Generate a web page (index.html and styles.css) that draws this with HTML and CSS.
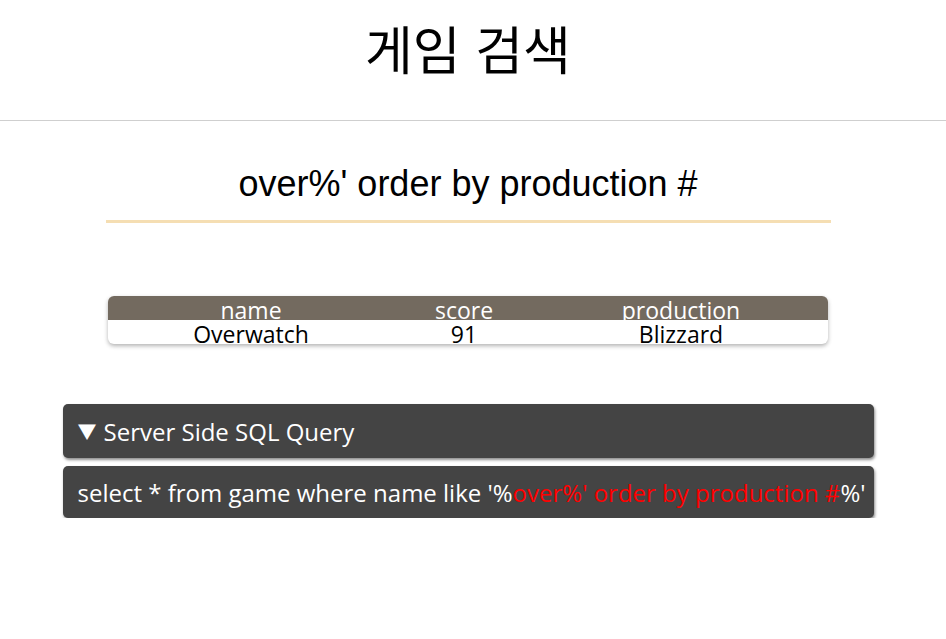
FILE: index.html
```html
<!DOCTYPE html>
<html lang="ko">
<head>
<meta charset="utf-8">
<title>게임 검색</title>
<link rel="stylesheet" href="styles.css">
</head>
<body>
<header class="top">
  <h1 class="title">게임 검색</h1>
</header>
<main class="page">
  <div class="search">
    <input class="search-input" type="text" value="over%' order by production #">
  </div>
  <table class="results">
    <thead>
      <tr><th class="c-name"><div class="cell">name</div></th><th class="c-score"><div class="cell">score</div></th><th class="c-prod"><div class="cell">production</div></th></tr>
    </thead>
    <tbody>
      <tr><td><div class="cell">Overwatch</div></td><td><div class="cell">91</div></td><td><div class="cell">Blizzard</div></td></tr>
    </tbody>
  </table>
  <details class="query" open>
    <summary class="query-head"><span class="tri">▼</span>Server Side SQL Query</summary>
    <div class="query-body">select * from game where name like '%<span class="inj">over%' order by production #</span>%'</div>
  </details>
</main>
</body>
</html>
```
FILE: styles.css
```css
html, body {
  margin: 0;
  padding: 0;
  background: #fff;
}
body {
  font-family: "Open Sans", "Noto Sans CJK KR", sans-serif;
  color: #000;
}
.top {
  border-bottom: 1px solid #cfcfcf;
  height: 121px;
  box-sizing: border-box;
}
.title {
  width: 936px;
  margin: 0;
  text-align: center;
  font-family: "Noto Sans CJK KR", sans-serif;
  font-weight: 400;
  font-size: 52px;
  line-height: 96px;
  letter-spacing: 0;
}
.page {
  width: 936px;
  display: flex;
  flex-direction: column;
  align-items: center;
}
.search {
  margin-top: 36px;
}
.search-input {
  display: block;
  width: 725px;
  box-sizing: border-box;
  border: none;
  border-bottom: 3px solid #f5deb3;
  padding: 6px 0 15px;
  margin: 0;
  font-family: "Liberation Sans", Arial, sans-serif;
  font-size: 36px;
  text-align: center;
  color: #000;
  background: transparent;
  outline: none;
}
.results {
  margin-top: 73px;
  width: 720px;
  border-collapse: separate;
  border-spacing: 0;
  border-radius: 6px;
  overflow: hidden;
  box-shadow: 0 2px 4px rgba(0,0,0,0.3);
  font-size: 23px;
  table-layout: fixed;
}
.results th, .results td {
  padding: 0;
  height: 24px;
  text-align: center;
  font-weight: 400;
  vertical-align: top;
}
.cell {
  height: 22px;
  padding-top: 2px;
  line-height: 24px;
  white-space: nowrap;
}
.results th {
  background: #736a5f;
  color: #fff;
}
.c-name { width: 286px; }
.c-score { width: 140px; }
.c-prod { width: 294px; }
.query {
  margin-top: 60px;
  width: 811px;
  color: #fff;
  font-size: 24px;
}
.query-head {
  list-style: none;
  display: flex;
  align-items: center;
  height: 54px;
  box-sizing: border-box;
  padding: 0 15px;
  background: #444;
  border-radius: 5px;
  box-shadow: 1px 2px 3px rgba(0,0,0,0.45);
  cursor: pointer;
}
.query-head::-webkit-details-marker { display: none; }
.tri {
  font-size: 19px;
  margin-right: 7px;
}
.query-body {
  margin-top: 8px;
  height: 52px;
  box-sizing: border-box;
  display: flex;
  align-items: center;
  padding: 0 15px;
  background: #444;
  border-radius: 5px;
  box-shadow: 1px 2px 3px rgba(0,0,0,0.45);
  white-space: pre;
}
.inj { color: #ff0000; }
```
